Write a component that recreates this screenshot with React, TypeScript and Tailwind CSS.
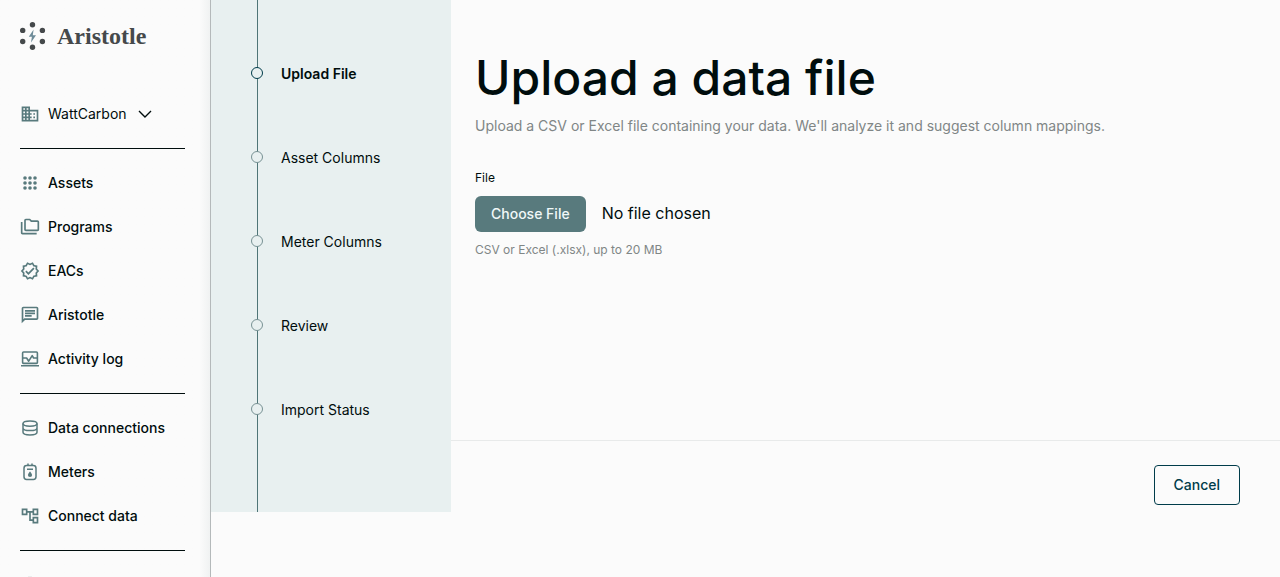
import type { ReactNode } from "react"
import { MdDomain, MdOutlineAccountTree, MdOutlineChat, MdOutlineFolderCopy, MdOutlineSettings } from "react-icons/md"
import { MdOutlineVerified } from "react-icons/md"

const steps = ["Upload File", "Asset Columns", "Meter Columns", "Review", "Import Status"]

function LogoMark() {
  return (
    <svg viewBox="0 0 26 28" className="h-7 w-[26px] shrink-0" aria-hidden="true">
      <g fill="#45494b">
        <circle cx="12.5" cy="2.8" r="2.7" />
        <circle cx="2.7" cy="8.4" r="2.7" />
        <circle cx="22.4" cy="8.4" r="2.7" />
        <circle cx="2.7" cy="19.5" r="2.7" />
        <circle cx="22.4" cy="19.5" r="2.7" />
        <circle cx="12.5" cy="25.2" r="2.7" />
      </g>
      <path d="M13.6 7.6 8.8 14.8h3.1l-.9 5.8 5-7.4h-3.2z" fill="#6d8b99" />
    </svg>
  )
}

function DotsIcon() {
  return (
    <svg viewBox="0 0 20 20" className="size-5" fill="currentColor" aria-hidden="true">
      {[5, 10, 15].map((y) => [5, 10, 15].map((x) => <circle key={`${x}-${y}`} cx={x} cy={y} r="1.8" />))}
    </svg>
  )
}

function ActivityIcon() {
  return (
    <svg viewBox="0 0 20 20" className="size-5" fill="none" stroke="currentColor" strokeWidth="1.6" aria-hidden="true">
      <rect x="2.6" y="3" width="14.8" height="11.4" rx="1" />
      <path d="M1 16.8h18M3 9h3.6l2.1 3.2 3.5-5.6L13.6 9H17" strokeLinejoin="round" />
    </svg>
  )
}

function DatabaseIcon() {
  return (
    <svg viewBox="0 0 20 20" className="size-5" fill="none" stroke="currentColor" strokeWidth="1.5" aria-hidden="true">
      <ellipse cx="10" cy="5.6" rx="7" ry="2.6" />
      <path d="M3 5.6v8.6c0 1.5 3.1 2.7 7 2.7s7-1.2 7-2.7V5.6M3 9.9c0 1.5 3.1 2.7 7 2.7s7-1.2 7-2.7" />
    </svg>
  )
}

function MeterIcon() {
  return (
    <svg viewBox="0 0 20 20" className="size-5" fill="none" stroke="currentColor" strokeWidth="1.5" aria-hidden="true">
      <rect x="4" y="3.6" width="12" height="13.8" rx="2.6" />
      <path d="M8 1.6v2M12 1.6v2M7 7.3h6" />
      <path d="M10 9.4s-2.1 2.2-2.1 3.6a2.1 2.1 0 0 0 4.2 0c0-1.4-2.1-3.6-2.1-3.6z" fill="currentColor" stroke="none" />
    </svg>
  )
}

function NavItem({ icon, children }: { icon: ReactNode; children: ReactNode }) {
  return (
    <li>
      <a href="#" className="flex h-11 items-center gap-2 text-sm font-medium">
        <span className="text-[#587a7d]">{icon}</span>
        {children}
      </a>
    </li>
  )
}

function Sidebar() {
  return (
    <aside className="sticky top-0 h-screen w-[211px] shrink-0 overflow-hidden border-r border-[#b4b9ba] bg-linear-to-r from-[#fbfbfb] from-95% to-[#f0f2f2] pr-[25px] pl-5">
      <a href="#" className="flex h-[72px] items-center gap-[11px] font-['Liberation_Serif',serif] text-2xl font-bold text-[#45494b]">
        <LogoMark />
        Aristotle
      </a>

      <button type="button" className="mt-5 flex h-11 items-center gap-2 text-sm">
        <MdDomain className="size-5 text-[#587a7d]" />
        WattCarbon
        <svg viewBox="0 0 20 20" className="size-5" fill="none" stroke="currentColor" strokeWidth="1.4" aria-hidden="true">
          <path d="m4 7 6 6 6-6" />
        </svg>
      </button>

      <nav>
        <hr className="my-3 border-[#000d0d]" />
        <ul>
          <NavItem icon={<DotsIcon />}>Assets</NavItem>
          <NavItem icon={<MdOutlineFolderCopy className="size-5" />}>Programs</NavItem>
          <NavItem icon={<MdOutlineVerified className="size-5" />}>EACs</NavItem>
          <NavItem icon={<MdOutlineChat className="size-5" />}>Aristotle</NavItem>
          <NavItem icon={<ActivityIcon />}>Activity log</NavItem>
        </ul>
        <hr className="my-3 border-[#000d0d]" />
        <ul>
          <NavItem icon={<DatabaseIcon />}>Data connections</NavItem>
          <NavItem icon={<MeterIcon />}>Meters</NavItem>
          <NavItem icon={<MdOutlineAccountTree className="size-5" />}>Connect data</NavItem>
        </ul>
        <hr className="my-3 border-[#000d0d]" />
        <a href="#" aria-label="Settings" className="flex h-11 items-center text-[#b9c1c2]">
          <MdOutlineSettings className="size-5" />
        </a>
      </nav>
    </aside>
  )
}

function Stepper() {
  return (
    <div className="w-60 shrink-0 bg-[#e8f0f0] pl-[46px]">
      <ol className="border-l border-[#4f7577] pt-8 pb-[60px] text-sm">
        {steps.map((step, i) => (
          <li key={step} className="-ml-[7px] flex h-[84px] items-center gap-[18px]" aria-current={i === 0 ? "step" : undefined}>
            <span className={`mb-0.5 size-3 rounded-full border bg-[#e8f0f0] ${i === 0 ? "border-[#003c4a]" : "border-[#789294]"}`} />
            <span className={i === 0 ? "font-semibold" : ""}>{step}</span>
          </li>
        ))}
      </ol>
    </div>
  )
}

export default function App() {
  return (
    <div className="flex min-h-screen bg-[#fbfbfb] font-[Inter,sans-serif] text-[#000d0d]">
      <Sidebar />

      <div className="flex min-w-0 flex-1 items-start">
        <Stepper />

        <main className="flex min-w-0 flex-1 flex-col self-stretch">
          <form>
            <div className="min-h-[440px] px-6 pt-12">
              <h1 className="text-5xl leading-[60px] font-medium">Upload a data file</h1>
              <p className="mt-2 text-sm text-[#808686]">
                Upload a CSV or Excel file containing your data. We'll analyze it and suggest column mappings.
              </p>

              <div className="mt-8">
                <label htmlFor="data-file" className="block text-xs leading-5">
                  File
                </label>
                <input
                  id="data-file"
                  type="file"
                  accept=".csv,.xlsx"
                  aria-describedby="data-file-hint"
                  className="mt-2 block w-full text-base file:mr-4 file:h-9 file:rounded-md file:bg-[#587a7d] file:px-4 file:text-sm file:font-medium file:text-[#f0f8f8]"
                />
                <p id="data-file-hint" className="mt-2 text-xs leading-5 text-[#808686]">
                  CSV or Excel (.xlsx), up to 20 MB
                </p>
              </div>
            </div>

            {/* Actions */}
            <div className="flex justify-end border-t border-[#e8eaea] px-10 py-6">
              <button type="button" className="h-10 rounded border border-[#003c4a] px-[19px] text-sm font-medium text-[#003c4a]">
                Cancel
              </button>
            </div>
          </form>
        </main>
      </div>
    </div>
  )
}
